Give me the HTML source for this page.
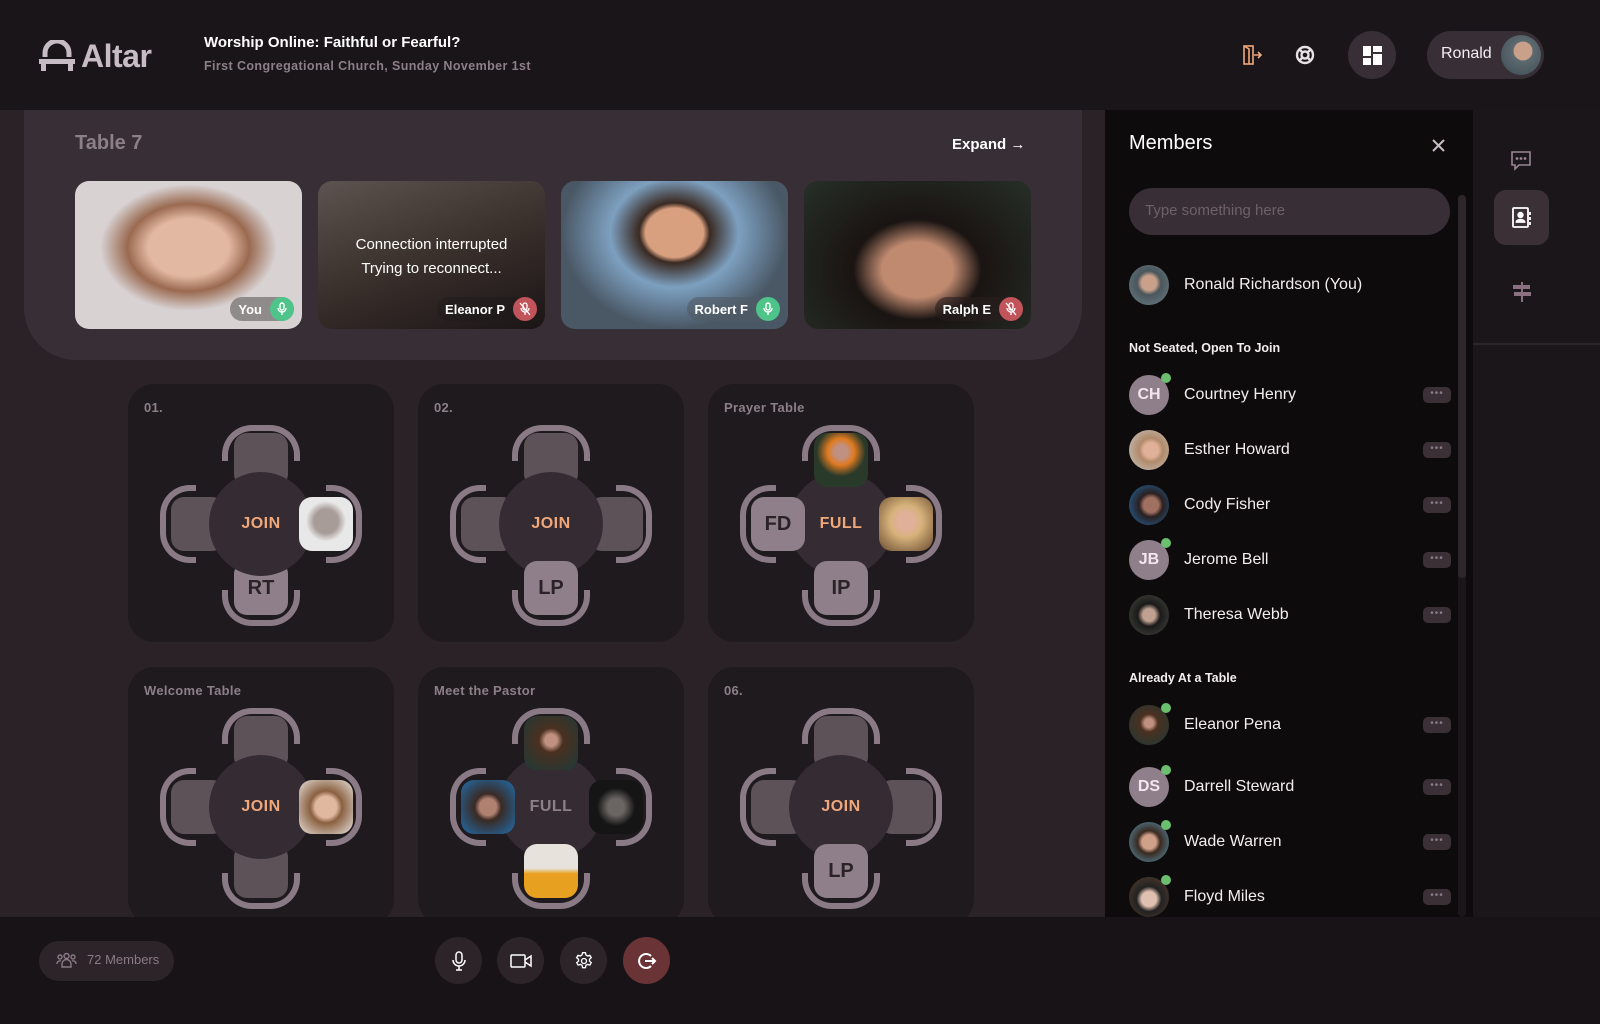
<!DOCTYPE html>
<html><head><meta charset="utf-8">
<style>
*{box-sizing:border-box;margin:0;padding:0}
body{width:1600px;height:1024px;overflow:hidden;background:#2a2226;font-family:"Liberation Sans",sans-serif;position:relative;color:#fff}
.abs{position:absolute}
.top{left:0;top:0;width:1600px;height:110px;background:#1a1518;z-index:5}
.panel{left:24px;top:90px;width:1058px;height:270px;background:#382e35;border-radius:0 0 52px 52px}
.tile{position:absolute;top:181px;width:227px;height:148px;border-radius:14px;overflow:hidden}
.tag{position:absolute;right:8px;bottom:8px;height:24px;border-radius:12px;display:flex;align-items:center;font-size:13px;font-weight:bold;padding-left:8px}
.mic{width:24px;height:24px;border-radius:12px;margin-left:8px;display:flex;align-items:center;justify-content:center}
.card{position:absolute;width:266px;height:258px;background:#1f1a1d;border-radius:26px}
.card .lbl{position:absolute;left:16px;top:16px;font-size:13px;font-weight:bold;color:#8d7f88;letter-spacing:.3px}
.br{position:absolute;border:6px solid #8a7a85}
.bt{left:94px;top:41px;width:78px;height:36px;border-bottom:none;border-radius:30px 30px 0 0}
.bb{left:94px;top:206px;width:78px;height:36px;border-top:none;border-radius:0 0 30px 30px}
.bl{left:32px;top:101px;width:36px;height:78px;border-right:none;border-radius:30px 0 0 30px}
.brr{left:198px;top:101px;width:36px;height:78px;border-left:none;border-radius:0 30px 30px 0}
.seat{position:absolute;width:54px;height:54px;border-radius:13px;background:#5e5259;z-index:1;display:flex;align-items:center;justify-content:center;font-size:20px;font-weight:bold;color:#2b2228}
.seat.i{background:#8f7f8a}
.seat.p,.seat.up{z-index:3}
.st{left:106px;top:49px}.sb{left:106px;top:177px}.sl{left:43px;top:113px}.sr{left:171px;top:113px}
.circ{position:absolute;left:81px;top:88px;width:104px;height:104px;border-radius:52px;background:#352c33;z-index:2;display:flex;align-items:center;justify-content:center;font-size:16px;font-weight:bold;color:#f0a77a;letter-spacing:.5px}
.side{left:1105px;top:110px;width:368px;height:807px;background:#0e0b0c}
.rail{left:1473px;top:110px;width:127px;height:807px;background:#1b1619}
.row{position:absolute;left:1129px;height:40px;width:322px;display:flex;align-items:center}
.av{width:40px;height:40px;border-radius:20px;position:relative;flex:none;display:flex;align-items:center;justify-content:center;font-size:16px;font-weight:bold;color:#f3e6ee;background:#8f7f8a}
.on:after{content:"";position:absolute;right:-2px;top:-2px;width:10px;height:10px;border-radius:5px;background:#6bbf6e}
.nm{margin-left:15px;font-size:16px;color:#f2eef0;flex:1}
.dots{width:28px;height:16px;border-radius:5px;background:#3a3035;color:#8a7a85;font-size:10px;line-height:14px;text-align:center;letter-spacing:1px}
.sec{position:absolute;left:1129px;font-size:12.5px;font-weight:bold;color:#f2eef0}
.foot{left:0;top:917px;width:1600px;height:107px;background:#181316;z-index:5}
.fb{position:absolute;top:937px;width:47px;height:47px;border-radius:24px;background:#2c2429;display:flex;align-items:center;justify-content:center;z-index:6}
</style></head><body>

<div class="abs top">
  <svg class="abs" style="left:39px;top:40px" width="36" height="32" viewBox="0 0 36 32"><path d="M6 17 V13 A12 12 0 0 1 30 13 V17" fill="none" stroke="#c8bcc4" stroke-width="5"/><rect x="0" y="19" width="36" height="5" fill="#c8bcc4"/><rect x="2" y="22" width="5" height="9" fill="#c8bcc4"/><rect x="29" y="22" width="5" height="9" fill="#c8bcc4"/></svg>
  <div class="abs" style="left:81px;top:38px;font-size:32px;font-weight:bold;color:#c8bcc4;letter-spacing:-.5px">Altar</div>
  <div class="abs" style="left:204px;top:34px;font-size:15px;font-weight:bold;color:#fff">Worship Online: Faithful or Fearful?</div>
  <div class="abs" style="left:204px;top:59px;font-size:12.5px;font-weight:bold;color:#8d7f88;letter-spacing:.4px">First Congregational Church, Sunday November 1st</div>
  <svg class="abs" style="left:1241px;top:44px" width="22" height="22" viewBox="0 0 22 22" fill="none" stroke="#f0a77a" stroke-width="1.6"><rect x="3" y="2" width="9" height="18"/><path d="M3 2 L8 5 V20"/><path d="M13 11 H20 M17 8 L20 11 L17 14"/></svg>
  <svg class="abs" style="left:1294px;top:44px" width="22" height="22" viewBox="0 0 22 22" fill="none" stroke="#e8e0e5" stroke-width="2.4"><circle cx="11" cy="11" r="8"/><circle cx="11" cy="11" r="3.5"/><path d="M5.5 5.5 L8.5 8.5 M16.5 5.5 L13.5 8.5 M5.5 16.5 L8.5 13.5 M16.5 16.5 L13.5 13.5"/></svg>
  <div class="abs" style="left:1348px;top:31px;width:48px;height:48px;border-radius:24px;background:#382e35"></div>
  <svg class="abs" style="left:1363px;top:46px" width="19" height="19" viewBox="0 0 19 19" fill="#fff"><rect x="0" y="0" width="8" height="10"/><rect x="10" y="0" width="9" height="6"/><rect x="10" y="8" width="9" height="11"/><rect x="0" y="12" width="8" height="7"/></svg>
  <div class="abs" style="left:1427px;top:31px;width:117px;height:48px;border-radius:24px;background:#382e35"></div>
  <div class="abs" style="left:1441px;top:45px;font-size:16px;color:#f2eef0">Ronald</div>
  <div class="abs" style="left:1501px;top:35px;width:40px;height:40px;border-radius:20px;background:radial-gradient(circle at 55% 40%,#c9a08a 0 28%,#5d6a70 30%,#3b4a52)"></div>
</div>

<div class="abs panel"></div>
<div class="abs" style="left:75px;top:132px;font-size:20px;font-weight:bold;color:#8d7f88">Table 7</div>
<div class="abs" style="left:952px;top:136px;font-size:15px;font-weight:bold;color:#fff">Expand →</div>

<div class="tile" style="left:75px;background:radial-gradient(ellipse at 50% 45%,#e3b8a2 0 25%,#9a6a50 38%,#d8d2d3 55%)">
  <div class="tag" style="background:rgba(120,115,115,.75)">You<div class="mic" style="background:#4ec38a"><svg width="12" height="14" viewBox="0 0 12 14" fill="none" stroke="#fff" stroke-width="1.4"><rect x="4" y="1" width="4" height="7" rx="2"/><path d="M2 6a4 4 0 0 0 8 0M6 10v3"/></svg></div></div>
</div>
<div class="tile" style="left:318px;background:linear-gradient(160deg,#5c5450,#3a302c 50%,#1b1516)">
  <div class="abs" style="left:0;top:52px;width:227px;text-align:center;font-size:15px;line-height:24px;color:#fff">Connection interrupted<br>Trying to reconnect...</div>
  <div class="tag" style="background:rgba(30,25,25,.5)">Eleanor P<div class="mic" style="background:#c0545a"><svg width="14" height="14" viewBox="0 0 14 14" fill="none" stroke="#fff" stroke-width="1.3"><rect x="5" y="1" width="4" height="7" rx="2"/><path d="M3 6a4 4 0 0 0 8 0M7 10v3M2 1l10 12"/></svg></div></div>
</div>
<div class="tile" style="left:561px;background:radial-gradient(ellipse at 50% 35%,#d9a080 0 18%,#3a2a22 22%,#7da0c0 40%,#4a5866 70%)">
  <div class="tag" style="background:rgba(80,90,100,.6)">Robert F<div class="mic" style="background:#4ec38a"><svg width="12" height="14" viewBox="0 0 12 14" fill="none" stroke="#fff" stroke-width="1.4"><rect x="4" y="1" width="4" height="7" rx="2"/><path d="M2 6a4 4 0 0 0 8 0M6 10v3"/></svg></div></div>
</div>
<div class="tile" style="left:804px;background:radial-gradient(ellipse at 50% 60%,#c08a70 0 22%,#1a1412 40%,#263028)">
  <div class="tag" style="background:rgba(40,30,30,.6)">Ralph E<div class="mic" style="background:#c0545a"><svg width="14" height="14" viewBox="0 0 14 14" fill="none" stroke="#fff" stroke-width="1.3"><rect x="5" y="1" width="4" height="7" rx="2"/><path d="M3 6a4 4 0 0 0 8 0M7 10v3M2 1l10 12"/></svg></div></div>
</div>

<!-- Row 1 -->
<div class="card" style="left:128px;top:384px"><div class="lbl">01.</div>
 <div class="br bt"></div><div class="br bb"></div><div class="br bl"></div><div class="br brr"></div>
 <div class="seat st"></div><div class="seat sl"></div><div class="seat i sb">RT</div>
 <div class="seat p sr" style="background:radial-gradient(circle at 50% 45%,#a89c98 0 30%,#e8e8e8 50%)"></div>
 <div class="circ">JOIN</div></div>
<div class="card" style="left:418px;top:384px"><div class="lbl">02.</div>
 <div class="br bt"></div><div class="br bb"></div><div class="br bl"></div><div class="br brr"></div>
 <div class="seat st"></div><div class="seat sl"></div><div class="seat sr"></div><div class="seat i up sb">LP</div>
 <div class="circ">JOIN</div></div>
<div class="card" style="left:708px;top:384px"><div class="lbl">Prayer Table</div>
 <div class="br bt"></div><div class="br bb"></div><div class="br bl"></div><div class="br brr"></div>
 <div class="seat p st" style="background:radial-gradient(circle at 50% 35%,#c09080 0 15%,#e07a20 30%,#2a3a2a 55%)"></div>
 <div class="seat i up sl">FD</div><div class="seat i up sb">IP</div>
 <div class="seat p sr" style="background:radial-gradient(circle at 50% 45%,#e0b098 0 22%,#d6b27a 40%,#6a4a30)"></div>
 <div class="circ">FULL</div></div>
<!-- Row 2 -->
<div class="card" style="left:128px;top:667px"><div class="lbl">Welcome Table</div>
 <div class="br bt"></div><div class="br bb"></div><div class="br bl"></div><div class="br brr"></div>
 <div class="seat st"></div><div class="seat sl"></div><div class="seat sb"></div>
 <div class="seat p sr" style="background:radial-gradient(circle at 50% 50%,#e0b8a0 0 28%,#8a6040 42%,#e8e2de)"></div>
 <div class="circ">JOIN</div></div>
<div class="card" style="left:418px;top:667px"><div class="lbl">Meet the Pastor</div>
 <div class="br bt"></div><div class="br bb"></div><div class="br bl"></div><div class="br brr"></div>
 <div class="seat p st" style="background:radial-gradient(circle at 50% 45%,#c09080 0 15%,#4a3020 30%,#1d3a38)"></div>
 <div class="seat p sl" style="background:radial-gradient(circle at 50% 50%,#b08070 0 22%,#3a2a24 35%,#1f6fb0)"></div>
 <div class="seat p sr" style="background:radial-gradient(circle at 50% 50%,#6a6462 0 22%,#151515 50%)"></div>
 <div class="seat p sb" style="background:linear-gradient(#e8e2dc 45%,#e8a020 55%)"></div>
 <div class="circ" style="color:#8d7f88">FULL</div></div>
<div class="card" style="left:708px;top:667px"><div class="lbl">06.</div>
 <div class="br bt"></div><div class="br bb"></div><div class="br bl"></div><div class="br brr"></div>
 <div class="seat st"></div><div class="seat sl"></div><div class="seat sr"></div><div class="seat i up sb">LP</div>
 <div class="circ">JOIN</div></div>

<!-- Sidebar -->
<div class="abs side"></div>
<div class="abs" style="left:1129px;top:132px;font-size:20px;color:#fff">Members</div>
<svg class="abs" style="left:1431px;top:138px" width="15" height="15" viewBox="0 0 15 15" stroke="#c8bcc4" stroke-width="2"><path d="M2 2L13 13M13 2L2 13"/></svg>
<div class="abs" style="left:1129px;top:188px;width:321px;height:47px;border-radius:24px;background:#382e35"></div>
<div class="abs" style="left:1145px;top:202px;font-size:15px;color:#6f6068">Type something here</div>
<div class="abs" style="left:1458px;top:195px;width:8px;height:722px;border-radius:4px;background:#1b1619"></div>
<div class="abs" style="left:1458px;top:195px;width:8px;height:383px;border-radius:4px;background:#2e262b"></div>

<div class="row" style="top:265px"><div class="av" style="background:radial-gradient(circle at 50% 45%,#c9a08a 0 25%,#4a565c 40%,#6e8088)"></div><div class="nm">Ronald Richardson (You)</div></div>
<div class="sec" style="top:341px">Not Seated, Open To Join</div>
<div class="row" style="top:375px"><div class="av on">CH</div><div class="nm">Courtney Henry</div><div class="dots">•••</div></div>
<div class="row" style="top:430px"><div class="av" style="background:radial-gradient(circle at 55% 50%,#e0b098 0 25%,#b08a6a 40%,#c8c8c8)"></div><div class="nm">Esther Howard</div><div class="dots">•••</div></div>
<div class="row" style="top:485px"><div class="av" style="background:radial-gradient(circle at 55% 50%,#a07060 0 25%,#2a2020 40%,#1f6fb0)"></div><div class="nm">Cody Fisher</div><div class="dots">•••</div></div>
<div class="row" style="top:540px"><div class="av on">JB</div><div class="nm">Jerome Bell</div><div class="dots">•••</div></div>
<div class="row" style="top:595px"><div class="av" style="background:radial-gradient(circle at 50% 50%,#c0a090 0 22%,#1a1a1a 40%,#4a4a44)"></div><div class="nm">Theresa Webb</div><div class="dots">•••</div></div>
<div class="sec" style="top:671px">Already At a Table</div>
<div class="row" style="top:705px"><div class="av on" style="background:radial-gradient(circle at 50% 45%,#c09080 0 15%,#4a3020 30%,#1d3a38)"></div><div class="nm">Eleanor Pena</div><div class="dots">•••</div></div>
<div class="row" style="top:767px"><div class="av on">DS</div><div class="nm">Darrell Steward</div><div class="dots">•••</div></div>
<div class="row" style="top:822px"><div class="av on" style="background:radial-gradient(circle at 50% 50%,#d0a088 0 25%,#3a2a20 40%,#5a9ab8)"></div><div class="nm">Wade Warren</div><div class="dots">•••</div></div>
<div class="row" style="top:877px"><div class="av on" style="background:radial-gradient(circle at 50% 55%,#e0c0b0 0 25%,#222 42%,#5a4030)"></div><div class="nm">Floyd Miles</div><div class="dots">•••</div></div>

<!-- Rail -->
<div class="abs rail"></div>
<div class="abs" style="left:1473px;top:343px;width:127px;height:2px;background:#2e262b"></div>
<svg class="abs" style="left:1510px;top:150px" width="22" height="22" viewBox="0 0 22 22" fill="none" stroke="#9a8592" stroke-width="1.6"><path d="M2 2H20V15H9L5 19V15H2Z"/><circle cx="7" cy="8.5" r=".6" fill="#9a8592"/><circle cx="11" cy="8.5" r=".6" fill="#9a8592"/><circle cx="15" cy="8.5" r=".6" fill="#9a8592"/></svg>
<div class="abs" style="left:1494px;top:190px;width:55px;height:55px;border-radius:12px;background:#3a3035"></div>
<svg class="abs" style="left:1511px;top:206px" width="22" height="24" viewBox="0 0 22 24" fill="none" stroke="#fff" stroke-width="1.8"><rect x="2" y="2" width="15" height="19" rx="1"/><path d="M19 6v3M19 11v3M19 16v3"/><circle cx="9.5" cy="9" r="2.3" fill="#fff"/><path d="M5.5 16c0-3 8-3 8 0z" fill="#fff"/></svg>
<svg class="abs" style="left:1511px;top:281px" width="22" height="22" viewBox="0 0 22 22" fill="#8a7080"><rect x="2" y="4" width="17" height="4"/><rect x="3" y="11" width="17" height="4"/><rect x="10" y="1" width="2" height="20"/></svg>

<!-- Footer -->
<div class="abs foot"></div>
<div class="abs" style="left:39px;top:941px;width:135px;height:40px;border-radius:20px;background:#2c2429;z-index:6"></div>
<svg class="abs" style="left:56px;top:952px;z-index:7" width="21" height="17" viewBox="0 0 21 17" fill="none" stroke="#8a7a85" stroke-width="1.4"><circle cx="10.5" cy="4" r="2.5"/><circle cx="4" cy="5" r="2"/><circle cx="17" cy="5" r="2"/><path d="M6 15v-3a4.5 4.5 0 0 1 9 0v3zM1 12a3 3 0 0 1 4-3M20 12a3 3 0 0 0-4-3"/></svg>
<div class="abs" style="left:87px;top:952px;font-size:13px;color:#8a7a85;z-index:7">72 Members</div>
<div class="fb" style="left:435px"><svg width="14" height="20" viewBox="0 0 14 20" fill="none" stroke="#fff" stroke-width="1.5"><rect x="4" y="1" width="6" height="11" rx="3"/><path d="M1 9a6 6 0 0 0 12 0M7 15v4M4 19h6"/></svg></div>
<div class="fb" style="left:497px"><svg width="22" height="16" viewBox="0 0 22 16" fill="none" stroke="#fff" stroke-width="1.5"><rect x="1" y="2" width="14" height="12" rx="1"/><path d="M15 7l6-4v10l-6-4"/></svg></div>
<div class="fb" style="left:560px"><svg width="20" height="20" viewBox="0 0 24 24" fill="none" stroke="#fff" stroke-width="1.6"><circle cx="12" cy="12" r="3"/><path d="M10.3 2h3.4l.6 2.8 2 1.2 2.7-.9 1.700 2.9-2.1 1.9v2.2l2.1 1.9-1.7 2.9-2.7-.9-2 1.2-.6 2.8h-3.4l-.6-2.8-2-1.2-2.7.9-1.7-2.9 2.1-1.9v-2.2L3.1 8l1.7-2.9 2.7.9 2-1.2z"/></svg></div>
<div class="fb" style="left:623px;background:#6a3436"><svg width="20" height="20" viewBox="0 0 20 20" fill="none" stroke="#fff" stroke-width="2"><path d="M14 5A7 7 0 1 0 14 15"/><path d="M8 10h10M15 7l3 3-3 3"/></svg></div>
</body></html>
